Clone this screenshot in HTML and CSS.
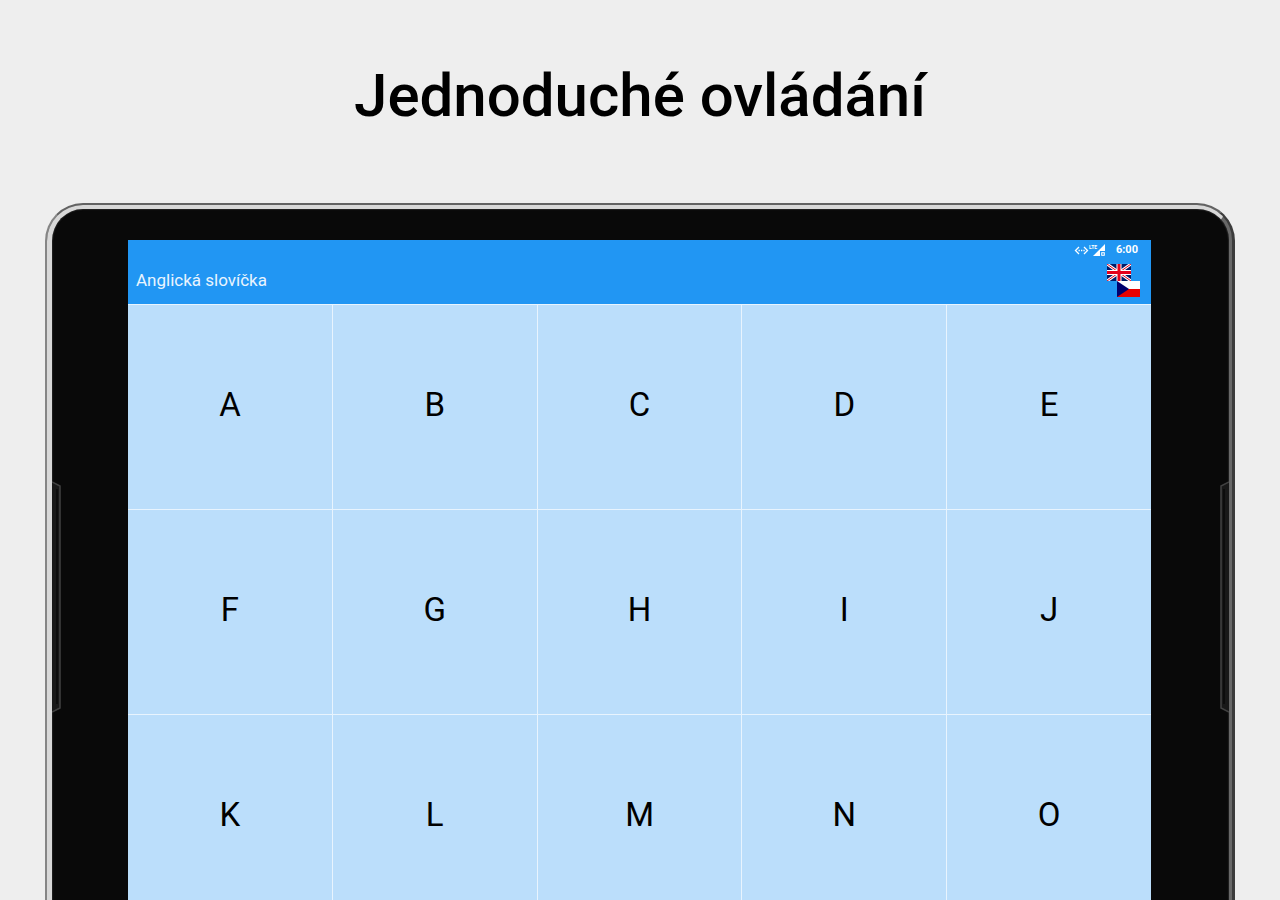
FILE: index.html
```html
<!DOCTYPE html>
<html lang="cs">
<head>
<meta charset="utf-8">
<meta name="viewport" content="width=device-width, initial-scale=1">
<title>Anglická slovíčka</title>
<link rel="stylesheet" href="styles.css">
</head>
<body>
<header class="promo"><h1 class="headline">Jednoduché ovládání</h1></header>
<main class="tablet">
  <div class="rim">
    <svg class="side side-left" width="10" height="232" viewBox="0 0 10 232" aria-hidden="true">
      <path d="M0 1L8 5V227L0 231" fill="#181818" stroke="#414141" stroke-width="1.5"/>
      <path d="M5 8V223" stroke="#0c0c0c" stroke-width="2"/>
    </svg>
    <svg class="side side-right" width="10" height="232" viewBox="0 0 10 232" aria-hidden="true">
      <path d="M10 1L2 5V227L10 231" fill="#181818" stroke="#414141" stroke-width="1.5"/>
      <path d="M5 8V223" stroke="#0c0c0c" stroke-width="2"/>
    </svg>
    <div class="screen">
      <div class="appbar">
        <div class="status">
          <svg width="32" height="14" viewBox="0 0 32 14" aria-hidden="true">
            <path d="M5 4L1.500 7.500L5 11M10 4L13.500 7.500L10 11" fill="none" stroke="#fff" stroke-width="1.300"/>
            <path d="M4.500 7.500h1.300M7 7.500h1.300M9.400 7.500h1.300" stroke="#fff" stroke-width="1.300"/>
            <text class="lte" x="15" y="6">LTE</text>
            <path d="M31 1V8H26V13H19Z" fill="#fff"/>
            <path d="M27.500 9.500h3v3h-3z" fill="#7cc0f8" stroke="#d6ebfd" stroke-width="1"/>
          </svg>
          <time class="clock">6:00</time>
        </div>
        <div class="toolbar">
          <h2 class="title">Anglická slovíčka</h2>
          <button class="language" aria-label="Přepnout jazyk">
            <svg width="34" height="34" viewBox="0 0 34 34" aria-hidden="true">
              <svg x="0" y="0" width="24" height="17" viewBox="0 0 24 17">
                <path d="M0 0h24v17H0z" fill="#001b69"/>
                <path d="M0 0L24 17M24 0L0 17" stroke="#fff" stroke-width="3"/>
                <path d="M0 0L24 17M24 0L0 17" stroke="#e5001a" stroke-width="1"/>
                <path d="M12 0V17M0 8.500H24" stroke="#fff" stroke-width="5"/>
                <path d="M12 0V17M0 8.500H24" stroke="#e5001a" stroke-width="3"/>
              </svg>
              <path d="M10 17h23v8H10z" fill="#fff"/>
              <path d="M10 25h23v8H10z" fill="#e80000"/>
              <path d="M10 17L22 25L10 33z" fill="#00006e"/>
            </svg>
          </button>
        </div>
      </div>
      <div class="letters">
        <button class="letter">A</button>
        <button class="letter">B</button>
        <button class="letter">C</button>
        <button class="letter">D</button>
        <button class="letter">E</button>
        <button class="letter">F</button>
        <button class="letter">G</button>
        <button class="letter">H</button>
        <button class="letter">I</button>
        <button class="letter">J</button>
        <button class="letter">K</button>
        <button class="letter">L</button>
        <button class="letter">M</button>
        <button class="letter">N</button>
        <button class="letter">O</button>
      </div>
    </div>
  </div>
</main>
</body>
</html>
```
FILE: styles.css
```css
* {
  box-sizing: border-box;
}

body {
  margin: 0;
  height: 100vh;
  overflow: hidden;
  background: #eeeeee;
  color: #000;
  font-family: Roboto, "Liberation Sans", sans-serif;
}

.promo {
  padding: 61px 16px 72px;
  text-align: center;
}

.headline {
  margin: 0;
  font-size: 60px;
  line-height: 70px;
  font-weight: 500;
}

.tablet {
  margin: 0 45px;
  border: solid;
  border-width: 2px 3px 0 2px;
  border-color: #626262 #3c3c3c #626262 #858585;
  border-radius: 38px 38px 0 0;
  background: #3a3a3a;
}

.rim {
  position: relative;
  padding: 31px 78px 0 76px;
  border: solid;
  border-width: 4px 3px 0 5px;
  border-color: #d8d8d8 #686868 #d8d8d8 #d8d8d8;
  border-radius: 36px 35px 0 0;
  background: #090909;
  box-shadow: inset 0 0 1px 1px #222;
}

.side {
  position: absolute;
  top: 272px;
}

.side-left {
  left: 0;
}

.side-right {
  right: 0;
}

.appbar {
  height: 64px;
  background: #2196f3;
  color: #fff;
}

.status {
  display: flex;
  align-items: center;
  justify-content: flex-end;
  gap: 10px;
  height: 19px;
  padding-right: 13px;
}

.lte {
  fill: #fff;
  font-size: 5px;
  font-weight: 700;
}

.clock {
  font-size: 11px;
  font-weight: 700;
}

.toolbar {
  display: flex;
  align-items: flex-start;
  justify-content: space-between;
  padding: 5px 10px 0 8px;
}

.title {
  margin: 0;
  padding-top: 6px;
  font-size: 17px;
  line-height: 20px;
  font-weight: 400;
  color: #e9f4fe;
}

.language {
  display: flex;
  padding: 0;
  border: 0;
  background: none;
}

.letters {
  display: grid;
  grid-template-columns: repeat(5, 1fr);
  gap: 1px;
  padding-top: 1px;
  background: #e8f4fe;
}

.letter {
  aspect-ratio: 1;
  padding: 0 0 3px;
  border: 0;
  background: #bbdefb;
  color: #000;
  font-family: inherit;
  font-size: 33px;
  line-height: 40px;
}
```
